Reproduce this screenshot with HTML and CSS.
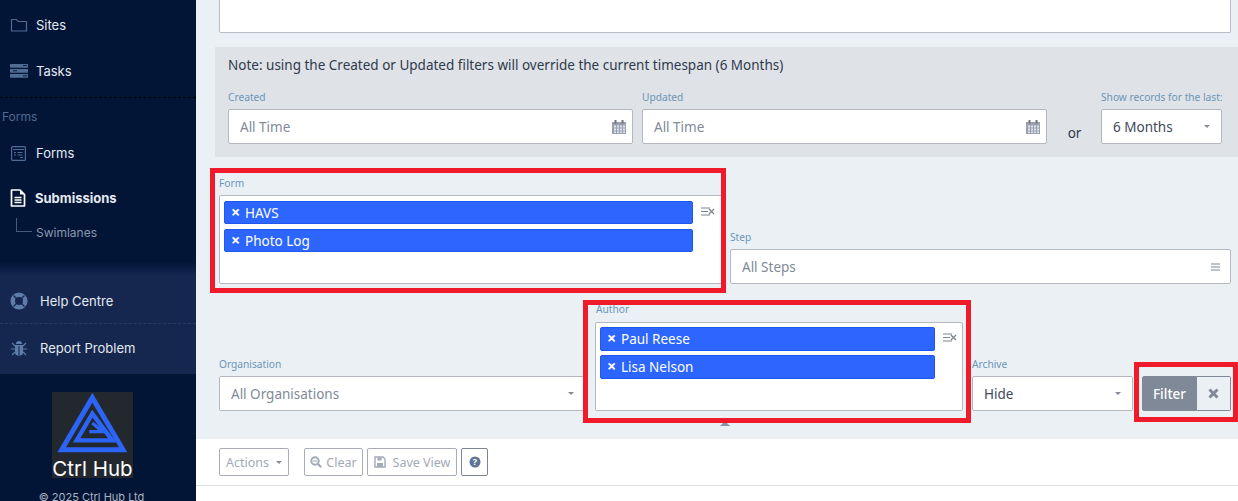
FILE: index.html
```html
<!DOCTYPE html>
<html lang="en">
<head>
<meta charset="utf-8">
<title>Submissions</title>
<link rel="stylesheet" href="styles.css">
</head>
<body>
<div class="app">
  <aside class="sidebar">
    <nav class="nav-top">
      <a class="nav-item nav-sites">
        <svg class="nav-icon" viewBox="0 0 18 18" width="18" height="18"><path d="M1.500 3.500h5l1.500 2h8.500v9.500h-15z" fill="none" stroke="#4f6c94" stroke-width="1.200" stroke-linejoin="round"/></svg>
        <span>Sites</span>
      </a>
      <a class="nav-item nav-tasks">
        <svg class="nav-icon" viewBox="0 0 18 14" width="18" height="14"><path d="M0 0h18v3.800H0zM0 5h18v3.800H0zM0 10h18v3.800H0z" fill="#4f6c94"/><path d="M13 1.500h4M3 6.800h4M13 11.800h4" stroke="#0b1d3e" stroke-width="1"/></svg>
        <span>Tasks</span>
      </a>
      <div class="nav-heading">Forms</div>
      <a class="nav-item nav-forms">
        <svg class="nav-icon icon-forms" viewBox="0 0 15 15" width="15" height="15"><rect x=".6" y=".6" width="13.800" height="13.800" rx="1" fill="none" stroke="#4f6c94" stroke-width="1.200"/><path d="M2 3.500h11M3 6.500h2M6.500 6.500h5M3 9h2M6.500 9h5M9 11.500h3" stroke="#4f6c94" stroke-width="1.100"/></svg>
        <span>Forms</span>
      </a>
      <a class="nav-item nav-submissions">
        <svg class="nav-icon" viewBox="0 0 16 18" width="16" height="18"><path d="M1.500 1h8.500l4.500 4.500v11.500h-13z" fill="#031537" stroke="#fff" stroke-width="1.700" stroke-linejoin="round"/><path d="M10 1v4.500h4.500z" fill="#fff"/><path d="M4.500 8.500h7M4.500 11h7M4.500 13.500h7" stroke="#fff" stroke-width="1.300"/></svg>
        <span>Submissions</span>
      </a>
      <a class="nav-sub">
        <span class="nav-elbow"></span>
        <span>Swimlanes</span>
      </a>
    </nav>
    <div class="help-block">
      <a class="help-item">
        <svg class="help-icon" viewBox="0 0 18 18" width="18" height="18"><circle cx="9" cy="9" r="6.300" fill="none" stroke="#5d7da8" stroke-width="4.600"/><path d="M3.500 3.500l3 3M14.500 3.500l-3 3M3.500 14.500l3-3M14.500 14.500l-3-3" stroke="#15274f" stroke-width="1.200"/></svg>
        <span>Help Centre</span>
      </a>
      <a class="help-item help-item-last">
        <svg class="help-icon" viewBox="0 0 16 16" width="16" height="16"><path d="M5 4a3 3 0 0 1 6 0z" fill="#5d7da8"/><path d="M4 5h8v7.500a3 3 0 0 1-3 3h-2a3 3 0 0 1-3-3z" fill="#5d7da8"/><path d="M8 6v9" stroke="#15274f" stroke-width="1"/><path d="M1 3l3 3M15 3l-3 3M0 9h4M16 9h-4M1 15l3-3M15 15l-3-3" stroke="#5d7da8" stroke-width="1.200"/></svg>
        <span>Report Problem</span>
      </a>
    </div>
    <div class="logo">
      <svg class="logo-mark" viewBox="0 0 255 210" width="85" height="70"><path d="M127 8L232 187H22z" fill="#2c64f6"/><path d="M127 38L207 172H48z" fill="#23282f"/><path d="M127 71L187 151H80z" fill="none" stroke="#2c64f6" stroke-width="13"/><path d="M118 125H158L127 99" fill="none" stroke="#2c64f6" stroke-width="10"/></svg>
      <span class="logo-text">Ctrl Hub</span>
    </div>
    <div class="copyright">© 2025 Ctrl Hub Ltd</div>
  </aside>

  <main class="main">
    <div class="search-box"></div>

    <section class="time-panel">
      <p class="note">Note: using the Created or Updated filters will override the current timespan (6 Months)</p>
      <div class="time-row">
        <div class="field field-date">
          <label class="label">Created</label>
          <div class="control">
            <span class="placeholder">All Time</span>
            <svg class="cal" viewBox="0 0 16 16" width="16" height="16"><path d="M1 3h14v12H1z" fill="#9aa1ad"/><path d="M3 6.500h2v2H3zM6 6.500h2v2H6zM9 6.500h2v2H9zM12 6.500h2v2h-2zM3 9.500h2v2H3zM6 9.500h2v2H6zM9 9.500h2v2H9zM12 9.500h2v2h-2zM3 12.500h2v1.500H3zM6 12.500h2v1.500H6zM9 12.500h2v1.500H9zM12 12.500h2v1.500h-2z" fill="#dfe6f3"/><path d="M3.500 1h2v3.500h-2zM10.500 1h2v3.500h-2z" fill="#6f7682"/></svg>
          </div>
        </div>
        <div class="field field-date">
          <label class="label">Updated</label>
          <div class="control">
            <span class="placeholder">All Time</span>
            <svg class="cal" viewBox="0 0 16 16" width="16" height="16"><path d="M1 3h14v12H1z" fill="#9aa1ad"/><path d="M3 6.500h2v2H3zM6 6.500h2v2H6zM9 6.500h2v2H9zM12 6.500h2v2h-2zM3 9.500h2v2H3zM6 9.500h2v2H6zM9 9.500h2v2H9zM12 9.500h2v2h-2zM3 12.500h2v1.500H3zM6 12.500h2v1.500H6zM9 12.500h2v1.500H9zM12 12.500h2v1.500h-2z" fill="#dfe6f3"/><path d="M3.500 1h2v3.500h-2zM10.500 1h2v3.500h-2z" fill="#6f7682"/></svg>
          </div>
        </div>
        <div class="or">or</div>
        <div class="field field-span">
          <label class="label">Show records for the last:</label>
          <div class="control">
            <span class="value">6 Months</span>
            <span class="caret"></span>
          </div>
        </div>
      </div>
    </section>

    <section class="filters">
      <div class="filter-row filter-row-one">
        <div class="field field-form">
          <label class="label">Form</label>
          <div class="control control-multi">
            <div class="tags">
              <div class="tag"><span class="tag-x">×</span>HAVS</div>
              <div class="tag"><span class="tag-x">×</span>Photo Log</div>
            </div>
            <svg class="clear-all" viewBox="0 0 14 9" width="14" height="9"><path d="M0 1h9M0 4.500h7M0 8h9" stroke="#7d8590" stroke-width="1"/><path d="M8 2l5 5M13 2l-5 5" stroke="#7d8590" stroke-width="1.300"/></svg>
          </div>
          <div class="highlight highlight-form"></div>
        </div>
        <div class="field field-step">
          <label class="label">Step</label>
          <div class="control">
            <span class="placeholder">All Steps</span>
            <svg class="lines" viewBox="0 0 9 8" width="9" height="8"><path d="M0 1h9M0 4h9M0 7h9" stroke="#7d8590" stroke-width="1.200"/></svg>
          </div>
        </div>
      </div>
      <div class="filter-row filter-row-two">
        <div class="field field-org">
          <label class="label">Organisation</label>
          <div class="control">
            <span class="placeholder">All Organisations</span>
            <span class="caret"></span>
          </div>
        </div>
        <div class="field field-author">
          <label class="label">Author</label>
          <div class="control control-multi">
            <div class="tags">
              <div class="tag"><span class="tag-x">×</span>Paul Reese</div>
              <div class="tag"><span class="tag-x">×</span>Lisa Nelson</div>
            </div>
            <svg class="clear-all" viewBox="0 0 14 9" width="14" height="9"><path d="M0 1h9M0 4.500h7M0 8h9" stroke="#7d8590" stroke-width="1"/><path d="M8 2l5 5M13 2l-5 5" stroke="#7d8590" stroke-width="1.300"/></svg>
          </div>
          <div class="highlight highlight-author"></div>
        </div>
        <div class="field field-archive">
          <label class="label">Archive</label>
          <div class="control">
            <span class="value">Hide</span>
            <span class="caret"></span>
          </div>
        </div>
        <div class="filter-actions">
          <button class="btn-filter" type="button">Filter</button>
          <button class="btn-reset" type="button"><svg viewBox="0 0 11 11" width="11" height="11"><path d="M1.500 1.500l8 8M9.500 1.500l-8 8" stroke="#808998" stroke-width="3"/></svg></button>
          <div class="highlight highlight-filter"></div>
        </div>
      </div>
      <div class="collapse-row"><span class="collapse-arrow"></span></div>
    </section>

    <section class="toolbar">
      <button class="tool-btn tool-actions" type="button">Actions<span class="caret caret-tool"></span></button>
      <button class="tool-btn tool-clear" type="button"><svg viewBox="0 0 12 12" width="12" height="12"><circle cx="5" cy="5" r="3.700" fill="none" stroke="#a3a9b6" stroke-width="2"/><path d="M8 8l3.200 3.200" stroke="#a3a9b6" stroke-width="2.200"/><path d="M3 5h4" stroke="#a3a9b6" stroke-width="1.200"/></svg>Clear</button>
      <button class="tool-btn tool-save" type="button"><svg viewBox="0 0 12 12" width="12" height="12"><path d="M1 1h8l2 2v8H1z" fill="none" stroke="#a3a9b6" stroke-width="1.400"/><path d="M3.500 1.500h4v3h-4zM3 7h6v4H3z" fill="#a3a9b6"/></svg>Save View</button>
      <button class="tool-btn tool-help" type="button"><svg viewBox="0 0 12 12" width="12" height="12"><circle cx="6" cy="6" r="5.500" fill="#5f7596"/><text x="6" y="9" text-anchor="middle" class="help-q">?</text></svg></button>
    </section>
    <div class="bottom-area"></div>
  </main>
</div>
</body>
</html>
```
FILE: styles.css
```css
* { box-sizing: border-box; }
html, body { margin: 0; height: 501px; overflow: hidden; }
body { font-family: "Noto Sans", sans-serif; font-size: 13.5px; color: #3a4454; background: #ebf0f5; }
.app { display: flex; height: 501px; overflow: hidden; }

/* Sidebar */
.sidebar { width: 196px; flex: none; height: 501px; overflow: hidden; background: #031537; font-family: Inter, sans-serif; font-size: 13px; color: #e4e9f2; display: flex; flex-direction: column; }
.sidebar > * { flex: none; }
.nav-top { height: 262px; padding-top: 2px; overflow: hidden; }
.nav-item { display: flex; align-items: center; height: 46px; padding-left: 10px; }
.nav-icon { flex: none; margin-right: 8px; }
.icon-forms { margin-left: 1px; margin-right: 10px; }
.nav-heading { border-top: 1px dashed #000; margin-top: 3px; height: 37px; padding: 11px 0 0 2px; font-size: 12px; color: #4d6a92; }
.nav-forms { height: 38px; }
.nav-submissions { height: 44px; font-weight: 700; padding-top: 8px; }
.nav-submissions .nav-icon { margin-right: 9px; }
.nav-sub { display: flex; align-items: center; height: 18px; margin-top: 7px; padding-left: 36px; position: relative; font-size: 12px; color: #8a97ad; }
.nav-elbow { position: absolute; left: 16px; top: -5px; width: 16px; height: 14px; border-left: 1px solid #46597a; border-bottom: 1px solid #46597a; }
.help-block { height: 112px; background: linear-gradient(#031537, #15274f 14px); padding-top: 15px; }
.help-item { display: flex; align-items: center; height: 47px; padding: 2px 0 0 10px; color: #e4e9f2; border-bottom: 1px dashed #2b3a58; }
.help-item-last { border-bottom: 0; padding-top: 0; }
.help-icon { flex: none; width: 18px; margin-right: 12px; }
.logo { width: 81px; height: 86px; margin: 18px 0 0 52px; background: #23282f; display: flex; flex-direction: column; align-items: center; overflow: hidden; }
.logo-mark { display: block; margin: -2px 0 0 0; flex: none; }
.logo-text { font-size: 20.500px; line-height: 18px; color: #fff; white-space: nowrap; }
.copyright { font-size: 11px; line-height: 16px; text-align: center; color: #aab3c2; margin-top: 11px; padding-right: 13px; }

/* Main */
.main { flex: 1; min-width: 0; display: flex; flex-direction: column; height: 501px; }
.search-box { height: 33px; flex: none; margin: 0 7px 0 23px; background: #fff; border: 1px solid #b9bcc2; border-top: 0; border-radius: 0 0 2px 2px; }
.time-panel { flex: none; height: 110px; margin: 14px 0 0 19px; padding: 8px 16px 0 13px; background: #dfe2e7; }
.note { margin: 0; line-height: 20px; color: #2f3a4b; }
.time-row { display: flex; align-items: flex-end; margin-top: 15px; }
.label { display: block; font-size: 10.200px; line-height: 14px; color: #6a96b8; white-space: nowrap; margin-bottom: 5px; }
.control { display: flex; align-items: center; justify-content: space-between; height: 35px; padding: 0 11px; background: #fff; border: 1px solid #b5b8bf; border-radius: 2px; }
.placeholder { color: #808a99; }
.value { color: #3e4a5c; }
.field { position: relative; flex: none; }
.field-date { width: 405px; margin-right: 9px; }
.field-date .control { padding-right: 5px; }
.or { width: 50px; text-align: center; margin-left: -2px; line-height: 22px; color: #2f3a4b; height: 22px; }
.field-span { width: 121px; margin-left: 6px; overflow: hidden; }
.caret { width: 0; height: 0; border-left: 3.500px solid transparent; border-right: 3.500px solid transparent; border-top: 3.500px solid #848b97; }

/* Filters */
.filters { flex: none; height: 282px; padding: 0 7px 0 23px; position: relative; }
.filter-row { display: flex; align-items: flex-end; }
.filter-row-one { height: 127px; gap: 6px; }
.field-form { width: 505px; }
.field-step { flex: 1; }
.control-multi { align-items: flex-start; height: 89px; padding: 5px 8px 0 4px; gap: 8px; }
.field-author .label { margin: 0 0 6px 1px; }
.field-author .control-multi { padding: 4px 5px 0 4px; }
.tags { flex: 1; display: flex; flex-direction: column; gap: 5px; min-width: 0; }
.field-author .tags { gap: 4px; }
.field-author .tag { height: 24px; }
.tag { height: 23px; background: #2c66ff; border: 1px solid #1f58ef; border-radius: 2px; color: #fff; line-height: 22px; padding-left: 6px; white-space: nowrap; }
.tag-x { font-weight: 700; display: inline-block; width: 14px; font-size: 16px; line-height: 20px; vertical-align: top; }
.clear-all { flex: none; margin-top: 6px; }
.field-step .control { padding-right: 10px; }
.filter-row-two { height: 127px; gap: 9px; }
.field-org { width: 367px; }
.field-author { width: 368px; }
.field-archive { width: 161px; }
.filter-actions { position: relative; flex: 1; display: flex; height: 35px; }
.btn-filter { width: 55px; height: 35px; border: 1px solid #808998; background: #808998; color: #fff; font: 500 13.5px "Noto Sans", sans-serif; border-radius: 2px 0 0 2px; padding: 0; }
.btn-reset { flex: 1; height: 35px; border: 1px solid #808998; border-left: 0; background: #ebf0f5; border-radius: 0 2px 2px 0; padding: 0; display: flex; align-items: center; justify-content: center; }
.collapse-row { display: flex; justify-content: center; margin-top: 10px; }
.collapse-arrow { width: 0; height: 0; border-left: 5px solid transparent; border-right: 5px solid transparent; border-bottom: 5px solid #8a93a3; }

/* Red annotation frames */
.highlight { position: absolute; border: 5px solid #ef1b2b; pointer-events: none; }
.highlight-form { left: -9px; right: -2px; top: -8px; bottom: -9px; }
.highlight-author { left: -12px; right: -8px; top: -2px; bottom: -12px; }
.highlight-filter { left: -8px; right: -7px; top: -14px; bottom: -11px; }

/* Toolbar */
.toolbar { flex: none; height: 47px; background: #fff; display: flex; align-items: flex-start; padding: 9px 0 0 23px; border-bottom: 1px solid #dcdde0; }
.tool-btn { height: 28px; display: flex; align-items: center; justify-content: center; gap: 4px; background: #fff; border: 1px solid #a9adba; border-radius: 2px; color: #a3a9b6; font: 12.500px "Noto Sans", sans-serif; padding: 0; margin-right: 4px; }
.tool-actions { width: 70px; margin-right: 15px; gap: 7px; }
.tool-clear { width: 59px; }
.tool-save { width: 90px; gap: 7px; }
.tool-help { width: 27px; border-color: #7c8494; }
.help-q { font: 700 9px "Noto Sans", sans-serif; fill: #fff; }
.bottom-area { flex: 1; background: #fff; }
```
